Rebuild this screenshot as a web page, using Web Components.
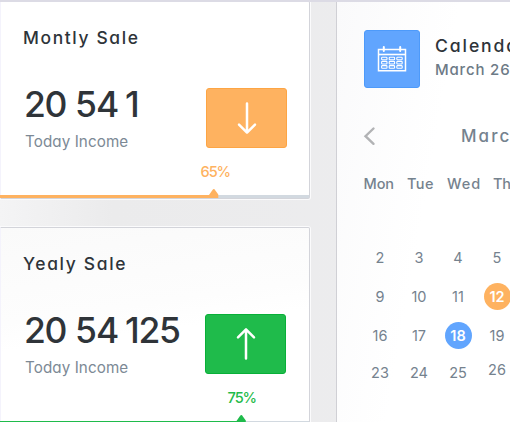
<!DOCTYPE html>
<html lang="en">
<head>
<meta charset="utf-8">
<title>Dashboard</title>
<style>
html,body{margin:0;height:422px;overflow:hidden}
body{font-family:Inter,"Open Sans",sans-serif;background:#ececee;color:#2e3439}
</style>
</head>
<body>
<dash-board>
  <stat-card slot="stats" heading="Montly Sale" heading-width="113" digits="20:39.5:41 54:40.5:40 1:9:9" label="Today Income" percent="65%" fill="214" direction="down" style="--accent:#feb260;--edge:#fda544;--tile-x:206px;--surface:#fff"></stat-card>
  <stat-card slot="stats" heading="Yealy Sale" heading-width="100.5" digits="20:39.5:41 54:40.5:40 125:52:52" label="Today Income" percent="75%" fill="241.5" direction="up" style="--accent:#1fbb4b;--edge:#08b038;--tile-x:205px;--surface:linear-gradient(172deg,#fafafa,#fdfdfd 40%,#fff 52%)"></stat-card>
  <calendar-panel slot="calendar"></calendar-panel>
</dash-board>
<script>
// A single line of text whose tracking is adjusted to fill the "w" attribute.
class TextLine extends HTMLElement{
  connectedCallback(){
    const r=this.attachShadow({mode:'open'});
    r.innerHTML=`<style>:host{display:block;white-space:nowrap;font-feature-settings:"cv11","calt" 0}span{display:inline-block}</style><span><slot></slot></span>`;
    const w=parseFloat(this.getAttribute('w'));
    const n=this.textContent.length;
    if(w){
      const s=r.querySelector('span');
      const natural=s.getBoundingClientRect().width-(parseFloat(getComputedStyle(this).fontSize)*.11);
      const gap=n>1?(w-natural)/(n-1):0;
      s.style.letterSpacing=gap+'px';
      s.style.marginRight=-gap+'px';
    }
  }
}
customElements.define('text-line',TextLine);

class ArrowTile extends HTMLElement{
  connectedCallback(){
    const d=this.getAttribute('direction')==='up'?'M15 31.5V2.5M7 10.3L15 2.3L23 10.3':'M15 2.5V31.5M7 23.7L15 31.7L23 23.7';
    this.attachShadow({mode:'open'}).innerHTML=`<style>:host{display:grid;place-items:center;box-sizing:border-box;width:81px;height:60px;border-radius:3px;background:var(--accent);border:1px solid var(--edge)}svg{display:block}path{fill:none;stroke:#fff;stroke-width:2.5;stroke-linecap:round;stroke-linejoin:round}</style><svg width="30" height="34"><path d="${d}"/></svg>`;
  }
}
customElements.define('arrow-tile',ArrowTile);

class StatCard extends HTMLElement{
  connectedCallback(){
    const a=k=>this.getAttribute(k);
    const words=a('digits').split(' ').map(p=>{const[t,w,box]=p.split(':');return `<text-line w="${w}" style="width:${box}px">${t}</text-line>`}).join('');
    const x=parseFloat(a('fill'));
    const up=a('direction')==='up';
    this.attachShadow({mode:'open'}).innerHTML=`<style>
:host{display:flex;flex-direction:column;box-sizing:border-box;width:310px;height:198px;border:1px solid #d3d4da;border-left:1px solid #f4f3fc;border-radius:0 2px 2px 0;background:var(--surface);box-shadow:0 0 0 1px #fbfbfc}
.title{font-size:17.4px;font-weight:500;line-height:24px;margin:24px 0 0 22px}
.mid{display:grid;grid-template-columns:calc(var(--tile-x) - 1px) 81px;margin-top:38px;height:61px}
.value{display:flex;gap:10px;font-size:35.5px;font-weight:500;line-height:36px;margin-top:-1px;padding-left:23px;color:#2f3439}
.label{font-size:15.2px;line-height:20px;color:#7c8995;padding-left:24px;margin-top:9px}
.percent{font-size:14.6px;font-weight:500;line-height:20px;color:var(--accent);margin-top:13px;padding-left:${up?226.5:199.5}px}
.track{margin-top:auto;margin-left:-1px;height:9px;flex:none}
svg{display:block}
</style>
<text-line class="title" w="${a('heading-width')}">${a('heading')}</text-line>
<div class="mid"><div><div class="value">${words}</div><text-line class="label" w="101.5">${a('label')}</text-line></div><arrow-tile direction="${a('direction')}"></arrow-tile></div>
<div class="percent"><text-line w="${up?28:29}">${a('percent')}</text-line></div>
<div class="track"><svg width="309" height="9"><path fill="#d2d9e0" d="M0 6H309V9H0z"/><path fill="var(--accent)" d="M0 6H${x-5}L${x-1.7} 1.2Q${x} -1 ${x+1.2} 1.2L${x+4.3} 5.5V9H0z"/></svg></div>`;
  }
}
customElements.define('stat-card',StatCard);

class CalendarIcon extends HTMLElement{
  connectedCallback(){
    let cells='';
    for(let r=0;r<3;r++)for(let c=0;c<3;c++)cells+=`<rect x="${4.6+c*7.6}" y="${12.2+r*4.2}" width="5.4" height="2.6" rx=".8"/>`;
    this.attachShadow({mode:'open'}).innerHTML=`<style>:host{display:grid;place-items:center;flex:none;box-sizing:border-box;width:56px;height:58px;border-radius:3px;background:#61a5fe;border:1px solid #4d9afa}svg{display:block;fill:none;stroke:#fff}</style>
<svg width="30" height="28"><path stroke-width="1.5" d="M1.5 4.5H28.5V25.7H1.5z"/><path stroke-width="1.6" d="M2 9.5H28"/><path stroke-width="2" stroke-linecap="round" d="M6.8 2V6M23.2 2V6"/><g stroke-width="1.1">${cells}</g></svg>`;
  }
}
customElements.define('calendar-icon',CalendarIcon);

class DayCell extends HTMLElement{
  connectedCallback(){
    this.attachShadow({mode:'open'}).innerHTML=`<style>:host{display:grid;place-items:center;justify-self:center;width:27px;height:27px;border-radius:50%;font-size:14.5px;line-height:27px}:host([mark]){color:#fff;font-weight:600}:host([mark=blue]){background:#61a5fe}:host([mark=orange]){background:#feb260}</style><text-line>${this.textContent}</text-line>`;
  }
}
customElements.define('day-cell',DayCell);

class CalendarPanel extends HTMLElement{
  connectedCallback(){
    const rows=[[2,3,4,5],[9,10,11,12],[16,17,18,19],[23,24,25,26]];
    const marks={12:'orange',18:'blue'};
    const days=rows.map(r=>`<div class="week">${r.map(n=>`<day-cell${marks[n]?` mark="${marks[n]}"`:''}${n===26?' class="raised"':''}>${n}</day-cell>`).join('')}</div>`).join('');
    this.attachShadow({mode:'open'}).innerHTML=`<style>
:host{display:block;box-sizing:border-box;height:421px;overflow:hidden;border-left:1px solid #d0d0d5;background:linear-gradient(100deg,#fafafb,#fff 50%);color:#75828e}
header{display:flex;padding:28px 0 0 27px;gap:15px}
.names{padding-top:4px}
.name{font-size:17.6px;font-weight:500;line-height:24px;color:#2e3439}
.date{font-size:15px;font-weight:500;line-height:24px;color:#6d7a86}
.month{display:flex;align-items:center;height:24px;margin:36px 0 0 26px;font-size:17px;font-weight:500}
.month svg{display:block;flex:none;margin-right:84px}
.names-row{display:flex;margin:26px 0 0 26.5px;font-size:14.5px;font-weight:500;line-height:20px}
.names-row text-line{flex:none}
.weeks{margin:44px 0 0 23.5px}
.week{display:grid;grid-template-columns:repeat(4,39px);height:39px;align-items:center}
.week:last-child{margin-top:-2px}
.raised{margin-top:-7px}
</style>
<header><calendar-icon></calendar-icon><div class="names"><text-line class="name" w="89">Calendar</text-line><text-line class="date" w="73">March 26</text-line></div></header>
<div class="month"><svg width="14" height="20"><path d="M10.5 2.5L2.5 10.2L10.5 17.8" fill="none" stroke="#b2b3b5" stroke-width="2.4" stroke-linecap="round"/></svg><text-line w="46.5">Marc</text-line></div>
<div class="names-row"><text-line w="29" style="width:43.5px">Mon</text-line><text-line w="25" style="width:40px">Tue</text-line><text-line w="31.5" style="width:46px">Wed</text-line><text-line w="16.5">Th</text-line></div>
<div class="weeks">${days}</div>`;
  }
}
customElements.define('calendar-panel',CalendarPanel);

class DashBoard extends HTMLElement{
  connectedCallback(){
    this.attachShadow({mode:'open'}).innerHTML=`<style>
:host{display:grid;box-sizing:border-box;grid-template-columns:310px 174px;column-gap:26px;width:510px;height:422px;overflow:hidden;border-top:2px solid #dcdbe5;background:linear-gradient(90deg,#f4f4f5,#ebebec 22%,#ededef)}
.stats{display:grid;align-content:start;row-gap:28px;margin-top:-1px}
</style><div class="stats"><slot name="stats"></slot></div><slot name="calendar"></slot>`;
  }
}
customElements.define('dash-board',DashBoard);
</script>
</body>
</html>
